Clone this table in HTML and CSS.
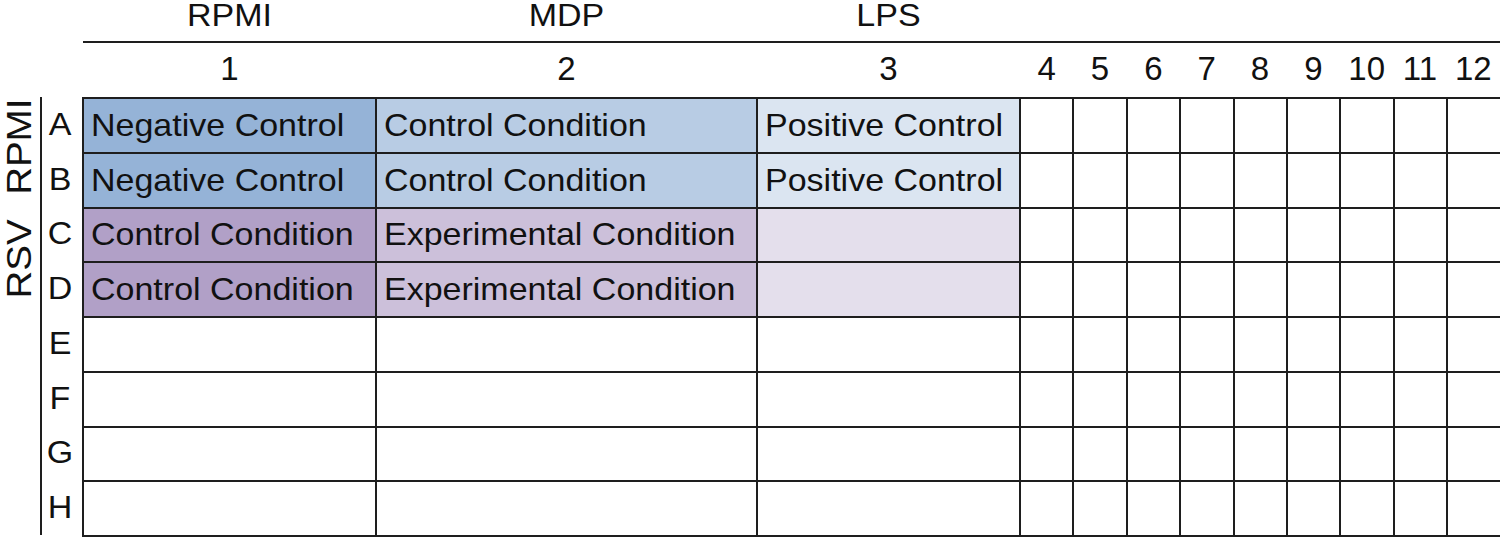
FILE: index.html
```html
<!DOCTYPE html>
<html lang="en">
<head>
<meta charset="utf-8">
<title>Plate layout</title>
<link rel="stylesheet" href="styles.css">
</head>
<body>
<div class="sheet">
  <div class="groups">
    <div class="group"><span class="txt">RPMI</span></div>
    <div class="group"><span class="txt">MDP</span></div>
    <div class="group"><span class="txt">LPS</span></div>
  </div>
  <div class="numbers">
    <div class="num">1</div><div class="num">2</div><div class="num">3</div>
    <div class="num">4</div><div class="num">5</div><div class="num">6</div>
    <div class="num">7</div><div class="num">8</div><div class="num">9</div>
    <div class="num">10</div><div class="num">11</div><div class="num">12</div>
  </div>
  <div class="side">
    <div class="treat treat-ab"><span>RPMI</span></div>
    <div class="treat treat-cd"><span>RSV</span></div>
    <div class="row-letter"><span class="txt">A</span></div>
    <div class="row-letter"><span class="txt">B</span></div>
    <div class="row-letter"><span class="txt">C</span></div>
    <div class="row-letter"><span class="txt">D</span></div>
    <div class="row-letter"><span class="txt">E</span></div>
    <div class="row-letter"><span class="txt">F</span></div>
    <div class="row-letter"><span class="txt">G</span></div>
    <div class="row-letter"><span class="txt">H</span></div>
  </div>
  <table class="plate">
    <colgroup>
      <col class="c-wide1"><col class="c-wide2"><col class="c-wide3">
      <col class="c-n"><col class="c-n"><col class="c-n"><col class="c-n"><col class="c-n">
      <col class="c-n"><col class="c-n"><col class="c-n"><col class="c-n">
    </colgroup>
    <tbody>
      <tr>
        <td class="blue1"><span class="txt">Negative Control</span></td>
        <td class="blue2"><span class="txt">Control Condition</span></td>
        <td class="blue3"><span class="txt">Positive Control</span></td>
        <td></td><td></td><td></td><td></td><td></td><td></td><td></td><td></td><td></td>
      </tr>
      <tr>
        <td class="blue1"><span class="txt">Negative Control</span></td>
        <td class="blue2"><span class="txt">Control Condition</span></td>
        <td class="blue3"><span class="txt">Positive Control</span></td>
        <td></td><td></td><td></td><td></td><td></td><td></td><td></td><td></td><td></td>
      </tr>
      <tr>
        <td class="purple1"><span class="txt">Control Condition</span></td>
        <td class="purple2"><span class="txt">Experimental Condition</span></td>
        <td class="purple3"></td>
        <td></td><td></td><td></td><td></td><td></td><td></td><td></td><td></td><td></td>
      </tr>
      <tr>
        <td class="purple1"><span class="txt">Control Condition</span></td>
        <td class="purple2"><span class="txt">Experimental Condition</span></td>
        <td class="purple3"></td>
        <td></td><td></td><td></td><td></td><td></td><td></td><td></td><td></td><td></td>
      </tr>
      <tr><td></td><td></td><td></td><td></td><td></td><td></td><td></td><td></td><td></td><td></td><td></td><td></td></tr>
      <tr><td></td><td></td><td></td><td></td><td></td><td></td><td></td><td></td><td></td><td></td><td></td><td></td></tr>
      <tr><td></td><td></td><td></td><td></td><td></td><td></td><td></td><td></td><td></td><td></td><td></td><td></td></tr>
      <tr><td></td><td></td><td></td><td></td><td></td><td></td><td></td><td></td><td></td><td></td><td></td><td></td></tr>
    </tbody>
  </table>
</div>
</body>
</html>
```

FILE: styles.css
```css
html, body {
  margin: 0;
  padding: 0;
  background: #ffffff;
}

body {
  font-family: "Liberation Sans", Arial, sans-serif;
  color: #111111;
  width: 1500px;
  height: 537px;
  overflow: hidden;
}

.sheet {
  display: grid;
  grid-template-columns: 83px 1417px;
  grid-template-rows: 43px 54px 440px;
}

.txt {
  display: inline-block;
  transform: scaleY(0.9);
  white-space: nowrap;
}

/* group header */
.groups {
  grid-column: 2;
  grid-row: 1;
  display: grid;
  grid-template-columns: 293px 381px 263px 1fr;
  border-bottom: 2px solid #1e1e1e;
  box-sizing: border-box;
}

.group {
  font-size: 34px;
  line-height: 28px;
  padding-top: 1px;
  text-align: center;
}

/* column numbers */
.numbers {
  grid-column: 2;
  grid-row: 2;
  display: grid;
  grid-template-columns: 293px 381px 263px repeat(9, 1fr);
}

.num {
  font-size: 33px;
  line-height: 51px;
  text-align: center;
}

/* side labels */
.side {
  grid-column: 1;
  grid-row: 3;
  display: grid;
  grid-template-columns: 40px 43px;
  grid-template-rows: repeat(8, 54.75px);
}

.treat {
  grid-column: 1;
  display: flex;
  align-items: center;
  justify-content: center;
  padding-right: 2px;
}

.treat span {
  writing-mode: vertical-rl;
  transform: rotate(180deg) scale(1, 1.1);
  font-size: 35px;
  line-height: 26px;
  white-space: nowrap;
}

.treat-ab { grid-row: 1 / span 2; padding-bottom: 10px; }
.treat-cd { grid-row: 3 / span 2; padding-bottom: 4px; }

.row-letter {
  grid-column: 2;
  border-left: 2px solid #1e1e1e;
  display: flex;
  align-items: center;
  justify-content: center;
  padding-right: 5px;
  font-size: 34px;
}

.row-letter:nth-of-type(3) { grid-row: 1; }
.row-letter:nth-of-type(4) { grid-row: 2; }
.row-letter:nth-of-type(5) { grid-row: 3; }
.row-letter:nth-of-type(6) { grid-row: 4; }
.row-letter:nth-of-type(7) { grid-row: 5; }
.row-letter:nth-of-type(8) { grid-row: 6; }
.row-letter:nth-of-type(9) { grid-row: 7; }
.row-letter:nth-of-type(10) { grid-row: 8; }

/* plate */
.plate {
  grid-column: 2;
  grid-row: 3;
  border-collapse: collapse;
  table-layout: fixed;
  width: 1418px;
  margin-left: -1px;
  align-self: start;
}

.c-wide1 { width: 293px; }
.c-wide2 { width: 381px; }
.c-wide3 { width: 263px; }
.c-n { width: 53.4px; }

.plate tr {
  height: 54.75px;
}

.plate td {
  border: 2px solid #1e1e1e;
  padding: 0 0 0 7px;
  font-size: 34px;
  vertical-align: middle;
  overflow: hidden;
}

.blue1 { background: #95b3d7; }
.blue2 { background: #b8cce4; }
.blue3 { background: #dbe5f1; }
.purple1 { background: #b1a0c7; }
.purple2 { background: #ccc0da; }
.purple3 { background: #e4dfec; }
```
